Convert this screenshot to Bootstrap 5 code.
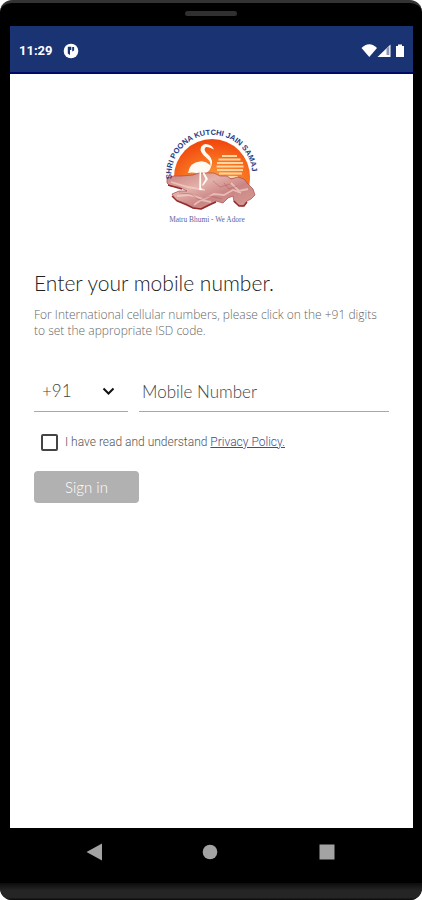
<!DOCTYPE html>
<html lang="en">
<head>
<meta charset="utf-8">
<meta name="viewport" content="width=device-width, initial-scale=1">
<title>Sign in</title>
<link rel="stylesheet" href="https://cdn.jsdelivr.net/npm/bootstrap@5.3.0/dist/css/bootstrap.min.css">
<style>
  body { background: #fff; font-family: Lato, "Open Sans", sans-serif; font-weight: 300; color: #333; }
  .phone { background: #000; border-radius: 12px; border-top: 3px solid #333; overflow: hidden; }
  .bezel-top { height: 23px; padding-top: 8px; }
  .speaker { width: 52px; height: 5px; border-radius: 3px; background: #303030; }
  .screen { margin: 0 9px 0 10px; }
  .statusbar { height: 48px; background: #1a3373; border-bottom: 2px solid #00086c; padding: 3px 7px 0 9px; font: 700 13px Roboto, sans-serif; color: #fff; }
  .content-area { padding: 51px 24px 24px; }
  .brand { margin-bottom: 40px; }
  h1 { font-size: 21px; line-height: 28px; font-weight: 300; color: #222; }
  .hint { font: 300 12px/16px "Open Sans", sans-serif; color: #666; margin: 10px 0 32px; }
  .country { width: 94px; margin-right: 11px; }
  .line-field { height: 41px; border: 0; border-bottom: 1px solid #a8a8a8; border-radius: 0; background-color: transparent; font-size: 17px; font-weight: 300; color: #444; padding: 0 3px; min-width: 0; }
  .line-field::placeholder { color: #444; opacity: 1; }
  .country .line-field { padding-left: 8px; appearance: none; }
  .chevron { right: 13px; top: 16px; pointer-events: none; }
  .agree { font-size: 12px; line-height: 18px; font-family: Roboto, sans-serif; color: #555; padding: 5px 0 0 7px; margin-bottom: 20px; }
  .agree .form-check-input { width: 17px; height: 17px; border: 2px solid #444; border-radius: 2px; margin-right: 7px; }
  .agree a { color: #4a4a80; }
  .sign { width: 105px; height: 32px; background: #b1b1b1; color: #fff; font-size: 15px; font-weight: 300; border: 0; border-radius: 4px; padding: 0; }
  .sign:hover { background: #a0a0a0; color: #fff; }
  .navkeys { height: 55px; padding: 0 80px 8px 78px; }
  .key { width: 30px; height: 30px; padding: 0; border: 0; background: none; line-height: 0; }
  .chin { height: 17px; background: linear-gradient(#0c0c0c, #252525 45%, #252525 85%, #080808); }
</style>
</head>
<body>
<div class="phone d-flex flex-column min-vh-100">
  <div class="bezel-top d-flex justify-content-center"><div class="speaker"></div></div>
  <div class="screen bg-white flex-grow-1 d-flex flex-column">
    <header class="statusbar d-flex align-items-center justify-content-between">
      <div class="d-flex align-items-center gap-2">
        <span>11:29</span>
        <svg width="18" height="16" viewBox="0 0 18 16" aria-hidden="true"><circle cx="10" cy="8" r="7.3" fill="#fff"/><path d="M7.2 3.7h3.1v3.2H9v5.2L6.8 10.5V4zM11.2 3.9h1.9v3.7l-1.9 1z" fill="#1a3373"/></svg>
      </div>
      <svg width="45" height="16" viewBox="0 0 45 16" aria-hidden="true"><path d="M.5 5C5-.1 11.500-.1 16 5L8.300 14z" fill="#fff"/><path d="M16.500 14L29.500 1.500V14z" fill="#fff"/><path d="M25.500 5.400l2.800-2.500V12h-2.800z" fill="#8e98b5"/><path d="M37 1.500h4V3h2v11h-8V3h2z" fill="#fff"/></svg>
    </header>
    <main class="content-area flex-grow-1">
      <div class="brand">
        <svg class="d-block mx-auto" width="102" height="104" viewBox="0 0 102 104" role="img" aria-label="Shri Poona Kutchi Jain Samaj">
          <defs>
            <radialGradient id="sun" cx=".55" cy=".8" r=".8"><stop offset="0" stop-color="#ffae48"/><stop offset=".45" stop-color="#fa7b25"/><stop offset="1" stop-color="#f0440c"/></radialGradient>
            <linearGradient id="land" x1="0" y1="0" x2="1" y2="1"><stop offset="0" stop-color="#c9807b"/><stop offset=".35" stop-color="#e3b0aa"/><stop offset=".6" stop-color="#c98583"/><stop offset="1" stop-color="#d9a099"/></linearGradient>
            <path id="arc" d="M10.500 54A40.500 40.500 0 1 1 87.500 67.500"/>
          </defs>
          <path d="M13 52A38 38 0 0 1 89 52Q89 61 86 68L62 72 13 56z" fill="url(#sun)"/>
          <g fill="none" stroke="#ffd6a1" stroke-width="1.800"><path d="M61 31h15M57.500 34.500h22M56 38h26M55.500 41.500h27M56 45h26M58 48.500h23M62 52h15"/></g>
          <g fill="#fffaf2"><path d="M27 48Q29 37 39 36.500Q44 35.500 49 40Q50 46 44 48.500Q39 51 35 48Q31 47 27 48z"/><path d="M48 44Q52 38 45.500 33Q38 27 40 22Q43 17.500 47 19.500Q51 20 53 24.500Q48 21.500 45 22Q42 24 45.500 28Q51.500 33 51 38Q50 45 46 47z"/></g>
          <path d="M6 53Q12 50 20 51L32 50 38 48 53 48 59 51 66 51 70 54 77 52 83 54 87 59 92 64 94 70 90 74 86 76 82 81 77 80 73 77 72 71 67 73 62 78 55 76 49 80 41 84 32 83 26 79 15 75 11 69 18 66 26 66 18 62 9 61 6 58z" fill="url(#land)" stroke="#a9474b" stroke-width=".7"/>
          <path d="M10 57l17 5 17 3M16 71l12-1 15 4 10-5 10 1 9-5 8 3M33 80l7-5 10 2M70 58l8 8 9-2" fill="none" stroke="#f6d6ce" stroke-width="1.800" opacity=".65"/>
          <path d="M18 68l12 1 8 6 11-4 12 3M52 56l7 6 10-3M63 58l5 6 8-3" fill="none" stroke="#a84449" stroke-width="1" opacity=".35"/>
          <path d="M7 60l14 4M11 71l5 5 10 4 6 3 8 1 8-4 7-3M73 76l5 5 5 0 3-4" fill="none" stroke="#922b2a" stroke-width="1.400"/>
          <path d="M38.500 47h1.600v16l2 2h-4zM43 47l4 7-5 7-.8-1 3.300-6-3-6z" fill="#fffaf2"/>
          <text font-family="Liberation Sans, sans-serif" font-size="7.600" font-weight="700" fill="#283b83"><textPath href="#arc">SHRI POONA KUTCHI JAIN SAMAJ</textPath></text>
          <text x="46" y="97" text-anchor="middle" font-family="Liberation Serif, serif" font-size="7.400" fill="#64649d">Matru Bhumi - We Adore</text>
        </svg>
      </div>
      <h1 class="mb-0">Enter your mobile number.</h1>
      <p class="hint">For International cellular numbers, please click on the +91 digits to set the appropriate ISD code.</p>
      <form>
        <div class="d-flex mb-3">
          <div class="country position-relative flex-shrink-0">
            <select class="line-field w-100" aria-label="Country code"><option>+91</option></select>
            <svg class="chevron position-absolute" width="13" height="9" viewBox="0 0 13 9" aria-hidden="true"><path d="M1.500 1.500l5 5 5-5" fill="none" stroke="#111" stroke-width="2"/></svg>
          </div>
          <input class="line-field flex-grow-1" type="tel" placeholder="Mobile Number" aria-label="Mobile Number">
        </div>
        <div class="agree d-flex align-items-center">
          <input class="form-check-input mt-0 flex-shrink-0" type="checkbox" id="agree">
          <label for="agree">I have read and understand <a href="#privacy">Privacy Policy.</a></label>
        </div>
        <button class="btn sign" type="submit">Sign in</button>
      </form>
    </main>
  </div>
  <nav class="navkeys d-flex align-items-center justify-content-between" aria-label="System navigation">
    <button class="key" type="button" aria-label="Back"><svg width="30" height="30" viewBox="0 0 30 30"><path d="M8.500 15L24 6.500v17z" fill="#a3a3a3"/></svg></button>
    <button class="key" type="button" aria-label="Home"><svg width="30" height="30" viewBox="0 0 30 30"><circle cx="15" cy="15" r="7.300" fill="#a3a3a3"/></svg></button>
    <button class="key" type="button" aria-label="Recent apps"><svg width="30" height="30" viewBox="0 0 30 30"><rect x="7.500" y="7.500" width="15" height="15" fill="#a3a3a3"/></svg></button>
  </nav>
  <div class="chin"></div>
</div>
<script src="https://cdn.jsdelivr.net/npm/bootstrap@5.3.0/dist/js/bootstrap.bundle.min.js"></script>
</body>
</html>
